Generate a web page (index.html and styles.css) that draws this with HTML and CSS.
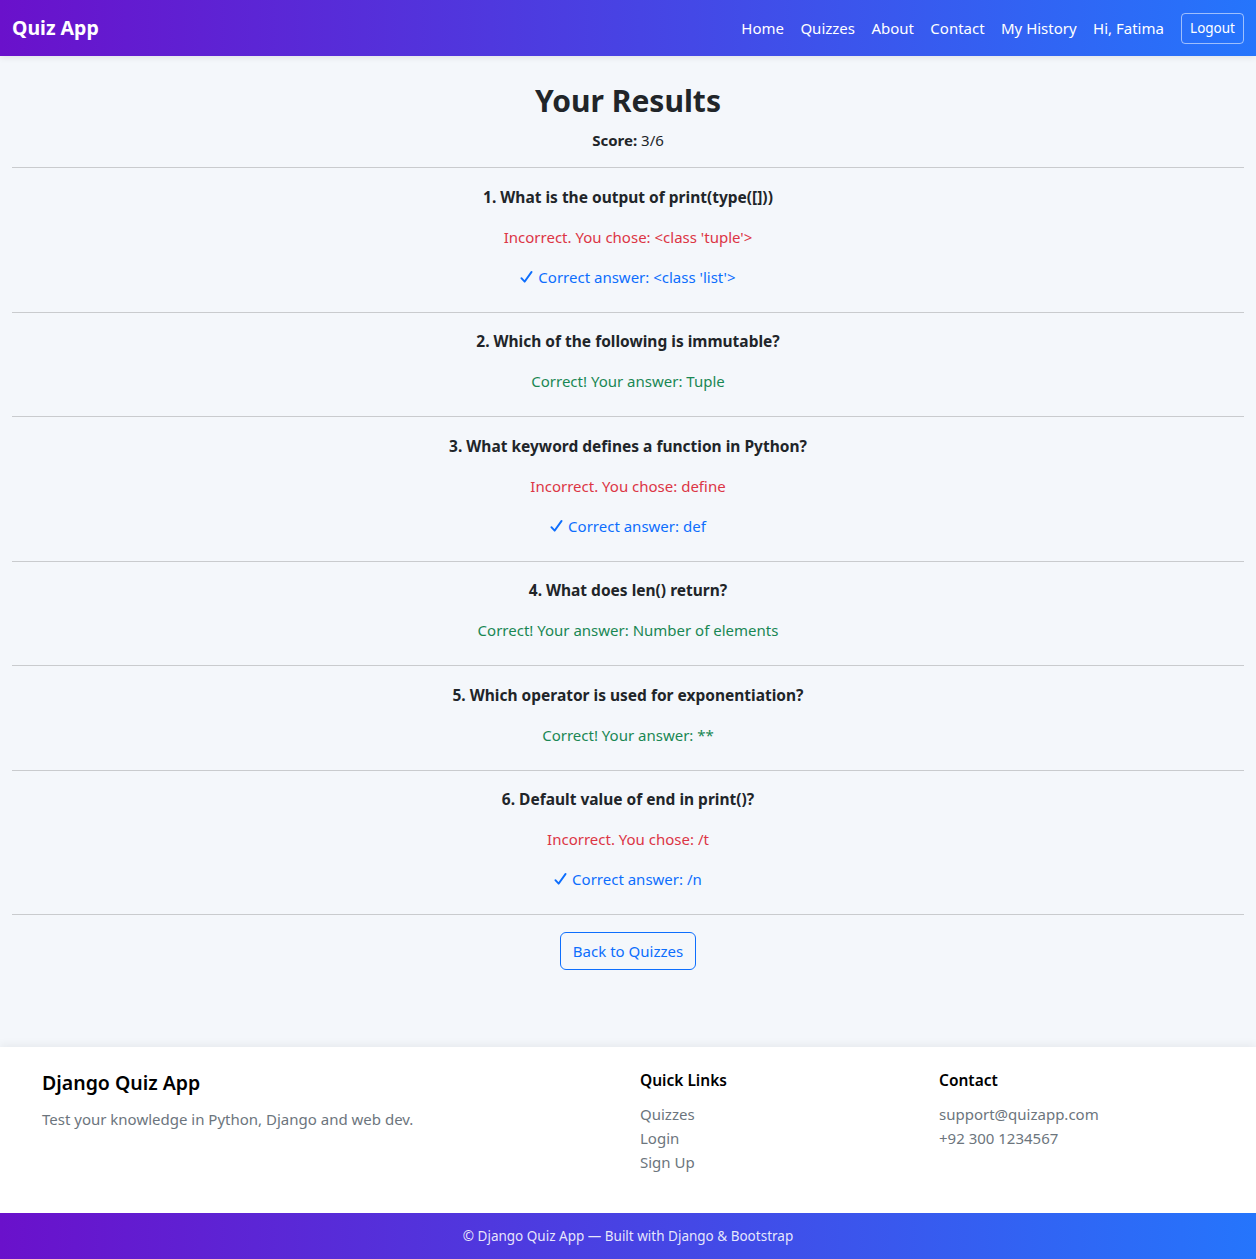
FILE: index.html
```html
<!DOCTYPE html>
<html lang="en">
<head>
<meta charset="utf-8">
<title>Quiz App - Results</title>
<link rel="stylesheet" href="styles.css">
</head>
<body>
<nav class="navbar">
  <a class="brand" href="#">Quiz App</a>
  <ul class="nav-links">
    <li><a href="#">Home</a></li>
    <li><a href="#">Quizzes</a></li>
    <li><a href="#">About</a></li>
    <li><a href="#">Contact</a></li>
    <li><a href="#">My History</a></li>
    <li><span class="greet">Hi, Fatima</span></li>
    <li><a class="btn-logout" href="#">Logout</a></li>
  </ul>
</nav>

<main class="content">
  <h2 class="title">Your Results</h2>
  <p class="score"><strong>Score:</strong> 3/6</p>
  <hr>

  <div class="question">
    <p class="q"><strong>1. What is the output of print(type([]))</strong></p>
    <p class="wrong">Incorrect. You chose: &lt;class 'tuple'&gt;</p>
    <p class="right"><svg class="check" viewBox="0 0 14 14" width="13" height="14"><path d="M1.5 8.2 L5 12 L12.5 1.5" fill="none" stroke="currentColor" stroke-width="2" stroke-linecap="round" stroke-linejoin="round"/></svg> Correct answer: &lt;class 'list'&gt;</p>
  </div>
  <hr>
  <div class="question">
    <p class="q"><strong>2. Which of the following is immutable?</strong></p>
    <p class="ok">Correct! Your answer: Tuple</p>
  </div>
  <hr>
  <div class="question">
    <p class="q"><strong>3. What keyword defines a function in Python?</strong></p>
    <p class="wrong">Incorrect. You chose: define</p>
    <p class="right"><svg class="check" viewBox="0 0 14 14" width="13" height="14"><path d="M1.5 8.2 L5 12 L12.5 1.5" fill="none" stroke="currentColor" stroke-width="2" stroke-linecap="round" stroke-linejoin="round"/></svg> Correct answer: def</p>
  </div>
  <hr>
  <div class="question">
    <p class="q"><strong>4. What does len() return?</strong></p>
    <p class="ok">Correct! Your answer: Number of elements</p>
  </div>
  <hr>
  <div class="question">
    <p class="q"><strong>5. Which operator is used for exponentiation?</strong></p>
    <p class="ok">Correct! Your answer: **</p>
  </div>
  <hr>
  <div class="question">
    <p class="q"><strong>6. Default value of end in print()?</strong></p>
    <p class="wrong">Incorrect. You chose: /t</p>
    <p class="right"><svg class="check" viewBox="0 0 14 14" width="13" height="14"><path d="M1.5 8.2 L5 12 L12.5 1.5" fill="none" stroke="currentColor" stroke-width="2" stroke-linecap="round" stroke-linejoin="round"/></svg> Correct answer: /n</p>
  </div>
  <hr>
  <div class="actions">
    <a class="btn-back" href="#">Back to Quizzes</a>
  </div>
</main>

<footer class="footer">
  <div class="footer-main">
    <div class="fcol">
      <h5 class="ftitle">Django Quiz App</h5>
      <p class="muted">Test your knowledge in Python, Django and web dev.</p>
    </div>
    <div class="fcol">
      <h6 class="fhead">Quick Links</h6>
      <ul class="flinks">
        <li><a href="#">Quizzes</a></li>
        <li><a href="#">Login</a></li>
        <li><a href="#">Sign Up</a></li>
      </ul>
    </div>
    <div class="fcol">
      <h6 class="fhead">Contact</h6>
      <ul class="flinks contact">
        <li>support@quizapp.com</li>
        <li>+92 300 1234567</li>
      </ul>
    </div>
  </div>
  <div class="footer-bar">© Django Quiz App — Built with Django &amp; Bootstrap</div>
</footer>
</body>
</html>
```

FILE: styles.css
```css
* { box-sizing: border-box; }
html, body { margin: 0; padding: 0; }
body {
  font-family: "Noto Sans", "Open Sans", sans-serif;
  font-size: 15px;
  line-height: 24px;
  color: #212529;
  background: #f4f7fb;
}
a { text-decoration: none; }

.navbar {
  height: 56px;
  display: flex;
  align-items: center;
  justify-content: space-between;
  padding: 0 12px;
  background: linear-gradient(to right, #6a11cb, #2575fc);
  box-shadow: 0 2px 6px rgba(0,0,0,0.08);
}
.brand {
  color: #fff;
  font-weight: 700;
  font-size: 19.5px;
  line-height: 30px;
}
.nav-links {
  list-style: none;
  margin: 0;
  padding: 0;
  display: flex;
  align-items: center;
}
.nav-links a, .greet {
  color: #fff;
  display: block;
  padding: 8px 8.2px;
}
.nav-links li:last-child { margin-left: 9px; }
.nav-links .btn-logout {
  font-size: 13.5px;
  line-height: 21px;
  padding: 4px 8px;
  border: 1px solid rgba(255,255,255,0.55);
  border-radius: 4px;
}

.content {
  padding: 26px 12px 0;
  text-align: center;
}
.title {
  font-size: 30px;
  font-weight: 700;
  line-height: 38px;
  margin: 0 0 8px;
}
.score { margin: 0 0 15px; }
hr {
  margin: 16px 0 16.5px;
  border: 0;
  border-top: 1px solid #c9cbce;
}
.content > hr:first-of-type { margin-top: 0; }
.question { padding-bottom: 7px; }
.question p { margin: 0 0 16px; }
.question p:last-child { margin-bottom: 0; }
.question .q { font-size: 15.5px; }
.wrong { color: #dc3545; }
.right { color: #0d6efd; }
.ok { color: #198754; }
.check { vertical-align: -1px; margin-right: 1px; }

.actions { padding-bottom: 77px; }
.btn-back {
  display: inline-block;
  color: #0d6efd;
  border: 1px solid #0d6efd;
  border-radius: 6px;
  padding: 6px 12px;
  line-height: 24px;
}

.footer {
  background: #fff;
  box-shadow: 0 -3px 8px rgba(0,0,0,0.05);
}
.footer-main {
  display: grid;
  grid-template-columns: 2fr 1fr 1fr;
  padding: 24px 30px 23px;
}
.fcol { padding: 0 12px; }
.ftitle {
  font-size: 19.5px;
  font-weight: 600;
  line-height: 24px;
  margin: 0 0 12px;
  color: #000;
}
.fhead {
  font-size: 15.5px;
  font-weight: 600;
  line-height: 19px;
  margin: 0 0 12px;
  color: #000;
}
.muted { color: #6c757d; margin: 0 0 16px; }
.flinks {
  list-style: none;
  margin: 0 0 16px;
  padding: 0;
}
.flinks a { color: #6c757d; }
.contact li { color: #6c757d; }

.footer-bar {
  height: 46px;
  display: flex;
  align-items: center;
  justify-content: center;
  font-size: 13.5px;
  color: rgba(255,255,255,0.88);
  background: linear-gradient(to right, #6a11cb, #2575fc);
}
```
